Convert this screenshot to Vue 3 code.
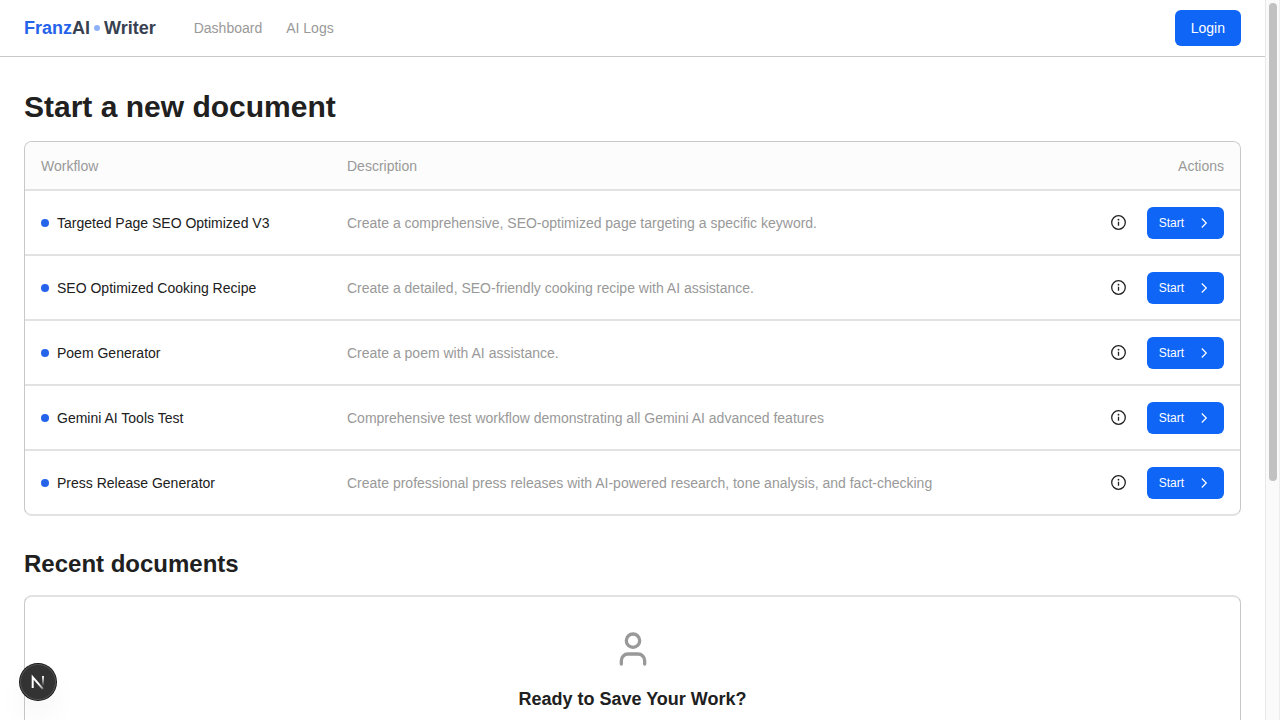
<script setup>
const workflows = [
  { name: 'Targeted Page SEO Optimized V3', description: 'Create a comprehensive, SEO-optimized page targeting a specific keyword.' },
  { name: 'SEO Optimized Cooking Recipe', description: 'Create a detailed, SEO-friendly cooking recipe with AI assistance.' },
  { name: 'Poem Generator', description: 'Create a poem with AI assistance.' },
  { name: 'Gemini AI Tools Test', description: 'Comprehensive test workflow demonstrating all Gemini AI advanced features' },
  { name: 'Press Release Generator', description: 'Create professional press releases with AI-powered research, tone analysis, and fact-checking' },
]
</script>

<template>
  <div class="app">
    <div class="page">
      <header class="topbar">
        <a class="logo" href="#">
          <span><span class="brand">Franz</span>AI</span>
          <span class="logo-dot"></span>
          <span>Writer</span>
        </a>
        <nav class="nav">
          <a href="#">Dashboard</a>
          <a href="#">AI Logs</a>
        </nav>
        <button class="login" type="button">Login</button>
      </header>

      <main class="content">
        <section>
          <h1>Start a new document</h1>
          <div class="card">
            <table>
              <thead>
                <tr>
                  <th class="col-name" scope="col">Workflow</th>
                  <th scope="col">Description</th>
                  <th class="col-actions" scope="col">Actions</th>
                </tr>
              </thead>
              <tbody>
                <tr v-for="w in workflows" :key="w.name">
                  <td>
                    <div class="name"><span class="dot"></span>{{ w.name }}</div>
                  </td>
                  <td class="description">{{ w.description }}</td>
                  <td>
                    <div class="actions">
                      <button class="info" type="button" :aria-label="'About ' + w.name">
                        <svg width="17" height="17" viewBox="0 0 17 17" fill="none" stroke="currentColor">
                          <circle cx="8.5" cy="8.5" r="6.8" stroke-width="1.3" />
                          <path d="M8.5 7.8v4" stroke-width="1.3" />
                          <circle cx="8.5" cy="5.7" r="0.9" fill="currentColor" stroke="none" />
                        </svg>
                      </button>
                      <button class="start" type="button">
                        Start
                        <svg width="16" height="16" viewBox="0 0 16 16" fill="none" stroke="currentColor" stroke-width="1.2">
                          <path d="M5.8 3.5l4.5 4.5-4.5 4.5" />
                        </svg>
                      </button>
                    </div>
                  </td>
                </tr>
              </tbody>
            </table>
          </div>
        </section>

        <section>
          <h2>Recent documents</h2>
          <div class="card empty">
            <svg width="40" height="40" viewBox="0 0 24 24" fill="none" stroke="currentColor" stroke-width="2" stroke-linecap="round" stroke-linejoin="round">
              <path d="M19 21v-2a4 4 0 0 0-4-4H9a4 4 0 0 0-4 4v2" />
              <circle cx="12" cy="7" r="4" />
            </svg>
            <h3>Ready to Save Your Work?</h3>
          </div>
        </section>
      </main>
    </div>

    <div class="scrollbar" aria-hidden="true"><div class="thumb"></div></div>

    <button class="devtools" type="button" aria-label="Open developer tools">
      <svg width="36" height="36" viewBox="0 0 36 36" fill="none">
        <defs>
          <linearGradient id="diagonal" x1="19" y1="19" x2="24" y2="25" gradientUnits="userSpaceOnUse">
            <stop stop-color="#fff" />
            <stop offset="0.7" stop-color="#fff" stop-opacity="0.6" />
            <stop offset="1" stop-color="#fff" stop-opacity="0" />
          </linearGradient>
          <linearGradient id="stem" x1="0" y1="12" x2="0" y2="22" gradientUnits="userSpaceOnUse">
            <stop stop-color="#fff" />
            <stop offset="1" stop-color="#fff" stop-opacity="0" />
          </linearGradient>
        </defs>
        <path d="M12.7 24V13.2l10.6 12.2" stroke="url(#diagonal)" stroke-width="2" />
        <path d="M23 12v10" stroke="url(#stem)" stroke-width="2" />
      </svg>
    </button>
  </div>
</template>

<style>
body {
  background: #fff;
}
</style>

<style scoped>
.app {
  display: flex;
  height: 100vh;
  overflow: hidden;
  font-family: "Liberation Sans", Arial, Helvetica, sans-serif;
  font-size: 14px;
  line-height: 20px;
  color: #202020;
}

.page {
  flex: 1;
  min-width: 0;
}

a {
  color: inherit;
  text-decoration: none;
}

button {
  display: flex;
  align-items: center;
  justify-content: center;
  border: 0;
  padding: 0;
  font: inherit;
  cursor: pointer;
}

.topbar {
  display: flex;
  align-items: center;
  height: 56px;
  padding: 0 24px;
  border-bottom: 1px solid #c8c8c8;
}

.logo {
  display: flex;
  align-items: center;
  gap: 4px;
  font-size: 18px;
  font-weight: 700;
  color: #374151;
}

.brand {
  color: #2563eb;
}

.logo-dot {
  width: 6px;
  height: 6px;
  border-radius: 50%;
  background: #8fb1f8;
}

.nav {
  display: flex;
  gap: 24px;
  margin-left: 38px;
  color: #999;
}

.login {
  height: 36px;
  margin-left: auto;
  padding: 0 16px;
  border-radius: 6px;
  background: #0f65f5;
  color: #fff;
}

.content {
  display: flex;
  flex-direction: column;
  gap: 32px;
  padding: 32px 24px;
}

h1,
h2,
h3 {
  margin: 0;
  font-weight: 700;
}

h1 {
  margin-bottom: 16px;
  font-size: 30px;
  line-height: 36px;
}

h2 {
  margin-bottom: 15px;
  font-size: 24px;
  line-height: 32px;
}

h3 {
  font-size: 18px;
  line-height: 28px;
}

.card {
  overflow: hidden;
  border: 1px solid #c8c8c8;
  border-bottom: 2px solid #e2e2e2;
  border-radius: 8px;
}

table {
  width: 100%;
  table-layout: fixed;
  border-collapse: separate;
  border-spacing: 0;
}

th {
  height: 47px;
  padding: 0 16px;
  border-bottom: 2px solid #e2e2e2;
  background: #fcfcfc;
  font-weight: 400;
  text-align: left;
  color: #999;
}

.col-name {
  width: 274px;
}

.col-actions {
  width: 153px;
  text-align: right;
}

td {
  height: 63px;
  padding: 0 16px;
  border-bottom: 2px solid #e2e2e2;
}

tr:last-child td {
  border-bottom: 0;
}

.name,
.actions {
  display: flex;
  align-items: center;
}

.name {
  gap: 8px;
}

.dot {
  width: 8px;
  height: 8px;
  border-radius: 50%;
  background: #2563eb;
}

.description {
  color: #999;
}

.actions {
  justify-content: flex-end;
  gap: 12px;
}

.info {
  width: 32px;
  height: 32px;
  background: none;
  color: #202020;
}

.start {
  gap: 12px;
  height: 32px;
  padding: 0 12px;
  border-radius: 6px;
  background: #0f65f5;
  font-size: 12px;
  color: #fff;
}

.empty {
  display: flex;
  flex-direction: column;
  align-items: center;
  gap: 16px;
  padding: 32px 24px;
  border-top: 2px solid #e2e2e2;
}

.empty svg {
  color: #999;
}

.scrollbar {
  flex: none;
  width: 15px;
  box-sizing: border-box;
  padding: 3px;
  border-left: 1px solid #e8e8e8;
  border-right: 1px solid #ededed;
  background: #fafafa;
}

.thumb {
  width: 8px;
  height: 67%;
  border-radius: 4px;
  background: #c1c1c1;
}

.devtools {
  position: fixed;
  left: 20px;
  bottom: 20px;
  width: 36px;
  height: 36px;
  border-radius: 50%;
  background: #333;
  box-shadow: 0 0 0 1px #171717, inset 0 0 0 1px #505050, 0 16px 32px -8px rgba(0, 0, 0, 0.14);
}
</style>
